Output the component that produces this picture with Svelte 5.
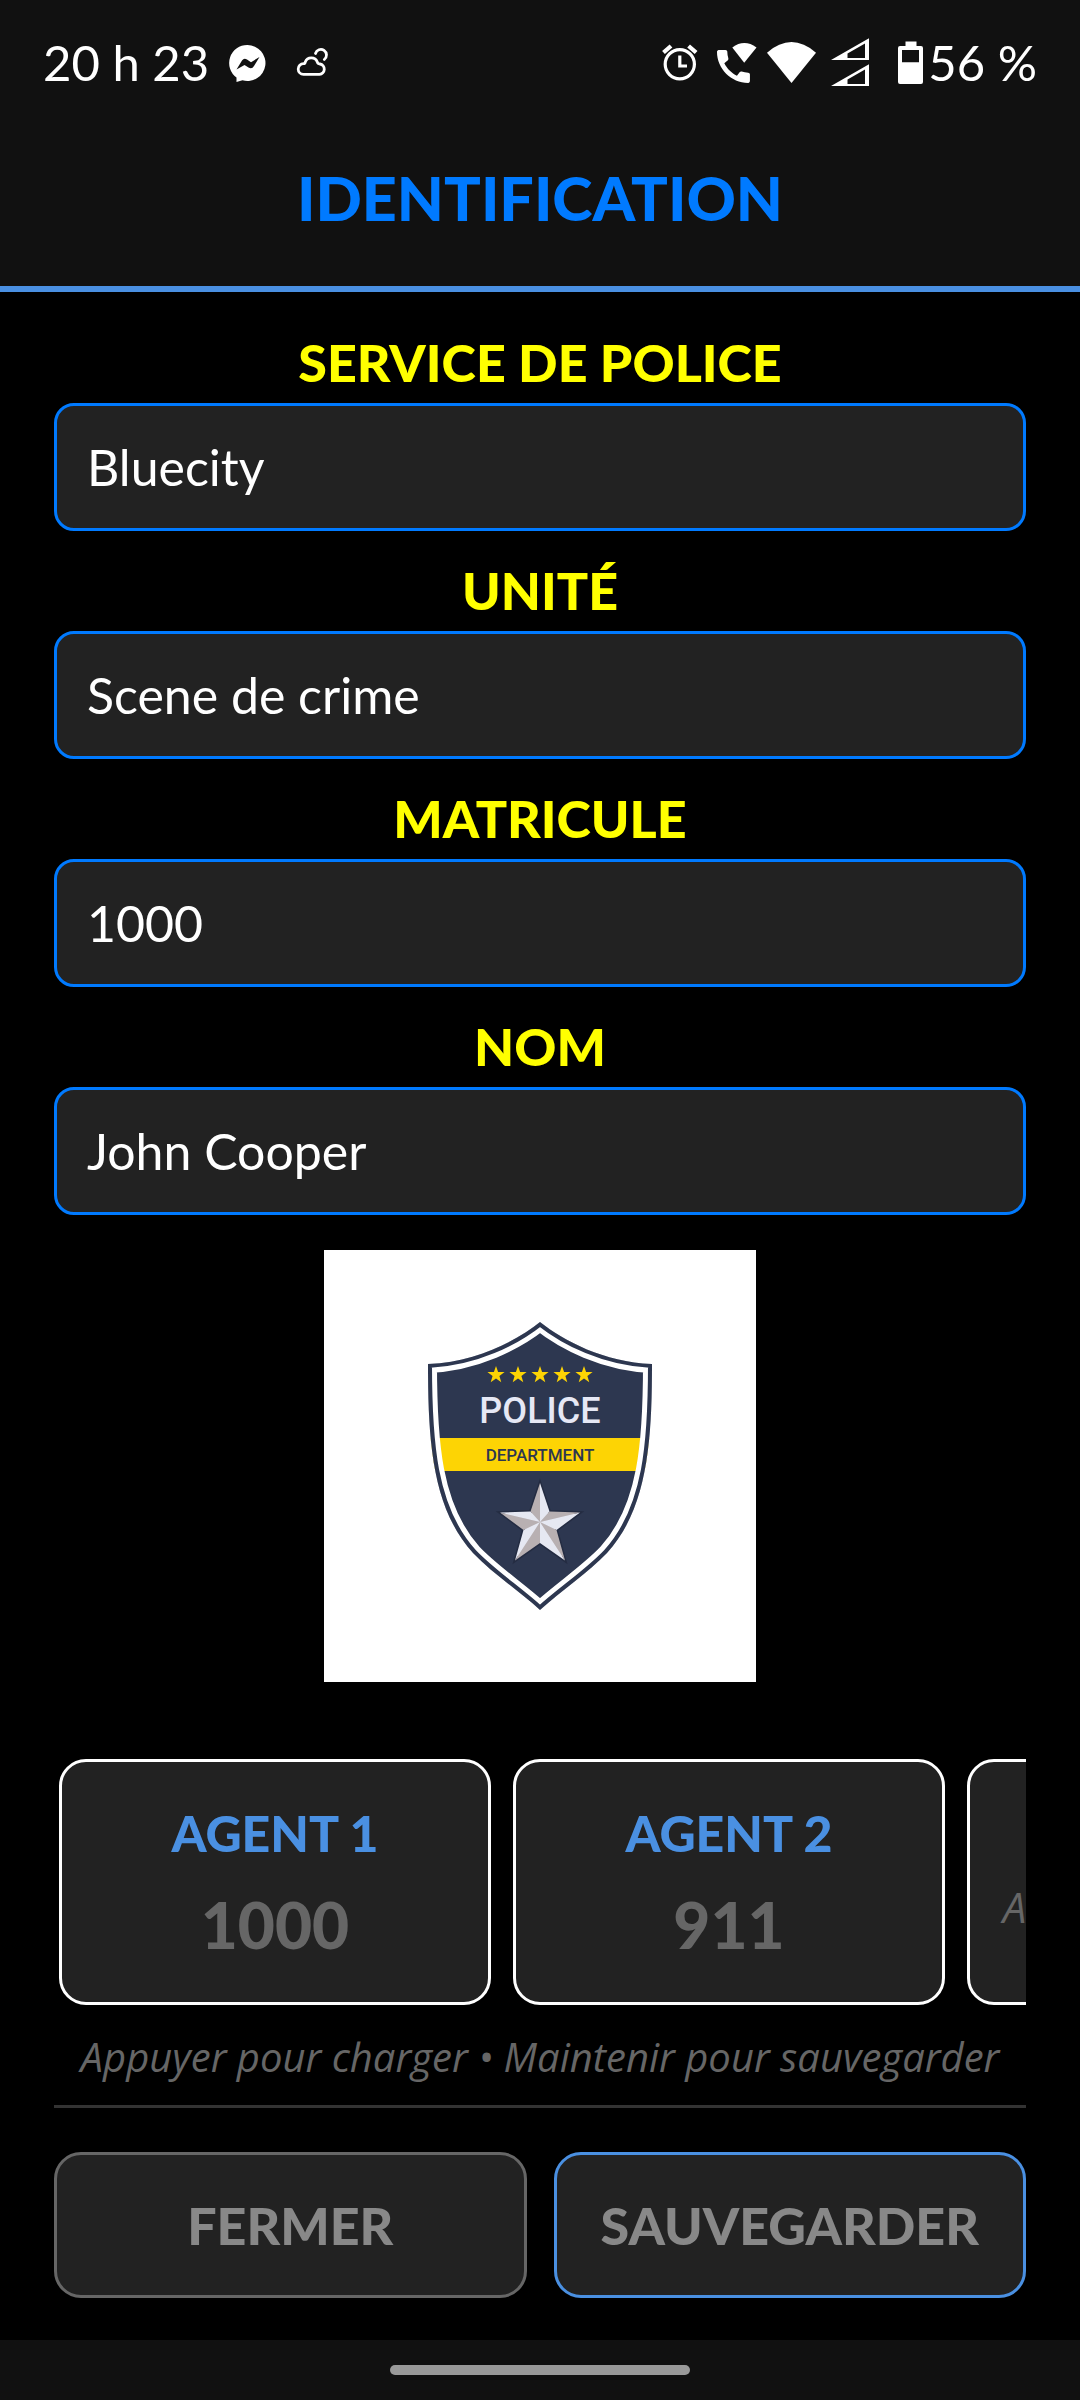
<script lang="ts">
  type Field = {
    id: string;
    label: string;
    value: string;
  };

  type Agent = {
    name: string;
    badge: string | null;
  };

  let fields: Field[] = $state([
    { id: 'service', label: 'SERVICE DE POLICE', value: 'Bluecity' },
    { id: 'unite', label: 'UNITÉ', value: 'Scene de crime' },
    { id: 'matricule', label: 'MATRICULE', value: '1000' },
    { id: 'nom', label: 'NOM', value: 'John Cooper' }
  ]);

  const agents: Agent[] = [
    { name: 'AGENT 1', badge: '1000' },
    { name: 'AGENT 2', badge: '911' },
    { name: 'AGENT 3', badge: null }
  ];

  const smallStars = [172, 194, 216, 238, 260];

  function loadAgent(agent: Agent) {
    if (agent.badge) {
      fields[2].value = agent.badge;
    }
  }
</script>

<div class="screen">
  <header>
    <div class="status-bar">
      <div class="status-left">
        <span>20 h 23</span>
        <svg class="status-icon" viewBox="0 0 50 50" aria-hidden="true">
          <path fill="#fff" d="M24.5 8a18 18 0 1 1-5 35.300L13.500 45V40.500A18 18 0 0 1 24.500 8z" />
          <path fill="#111" d="M13.500 32.500 19 23.500Q21 20.500 24 22.500L28 25.200 36.500 20 31 29Q29 32.500 25.500 30.500L21.500 28z" />
        </svg>
        <svg class="status-icon" viewBox="0 0 50 50" fill="none" stroke="#fff" stroke-width="2.800" stroke-linecap="round" aria-hidden="true">
          <path d="M16.500 37.300A5.300 5.300 0 0 1 16.500 26.700Q18 26.700 18.300 25A6.400 6.400 0 0 1 30.300 25Q30.700 26.800 33 27A5.200 5.200 0 0 1 32.500 37.300z" />
          <path d="M28.500 16.500A5.600 5.600 0 1 1 37.300 22.500" />
        </svg>
      </div>
      <div class="status-right">
        <svg class="status-icon" viewBox="0 0 50 50" fill="none" stroke="#fff" stroke-width="3.200" aria-hidden="true">
          <circle cx="24.800" cy="27.300" r="14.600" />
          <path d="M24.800 18.500V29H32" />
          <path stroke-width="4.200" d="M8.500 15.500 16 9M41.100 15.500 33.600 9" />
        </svg>
        <svg class="status-icon" viewBox="0 0 50 50" fill="#fff" aria-hidden="true">
          <path transform="translate(.5 7.500) scale(1.830)" d="M20.010 15.380c-1.230 0-2.420-.2-3.530-.56-.35-.12-.74-.03-1.010.24l-1.570 1.970c-2.830-1.350-5.480-3.900-6.890-6.830l1.950-1.660c.27-.28.35-.67.24-1.020-.37-1.110-.56-2.300-.56-3.530 0-.54-.45-.99-.99-.99H4.190C3.650 3 3 3.240 3 3.990 3 13.280 10.730 21 20.010 21c.71 0 .99-.63.99-1.180v-3.450c0-.54-.45-.99-.99-.99z" />
          <path d="M33.200 25.700 21.300 10.500Q33.300 1.700 45.500 10.500z" />
        </svg>
        <svg class="status-icon" viewBox="0 0 50 50" fill="#fff" aria-hidden="true">
          <path d="M24.500 46 0 15.700Q24.500-5.500 49 15.700z" />
        </svg>
        <svg class="status-icon" viewBox="0 0 50 50" fill="#fff" fill-rule="evenodd" aria-hidden="true">
          <path d="M8 23 46 1.300V23zM24.500 21H42V6.500L24.500 16.500z" />
          <path d="M8 49 46 27.300V49zM24.500 47H42V32.500L24.500 42.500z" />
        </svg>
        <svg class="status-icon" viewBox="0 0 50 50" fill="#fff" fill-rule="evenodd" aria-hidden="true">
          <path d="M26.500 4.500h11V9H42a2 2 0 0 1 2 2v34a2 2 0 0 1-2 2H21a2 2 0 0 1-2-2V11a2 2 0 0 1 2-2h5.500zM23 13v12.300h17V13z" />
        </svg>
        <span>56 %</span>
      </div>
    </div>
    <h1>IDENTIFICATION</h1>
  </header>

  <main>
    <form class="fields">
      {#each fields as field (field.id)}
        <div class="field">
          <label for={field.id}>{field.label}</label>
          <input id={field.id} type="text" bind:value={field.value} />
        </div>
      {/each}
    </form>

    <svg class="crest" viewBox="0 0 432 432" role="img" aria-label="Police Department">
      <defs>
        <path id="shield" d="M216 72C192 91 152 112 104 114C104 190 108 258 149 303C168 323 194 340 216 360C238 340 264 323 283 303C324 258 328 190 328 114C280 112 240 91 216 72z" />
        <clipPath id="shield-clip">
          <use href="#shield" />
        </clipPath>
      </defs>
      <rect width="432" height="432" fill="#fff" />
      <g clip-path="url(#shield-clip)">
        <use href="#shield" fill="#2d3750" />
        <rect x="100" y="188" width="232" height="33" fill="#fdd404" />
        <use href="#shield" fill="none" stroke="#fff" stroke-width="18" />
        <use href="#shield" fill="none" stroke="#2d3750" stroke-width="8" />
      </g>
      {#each smallStars as x}
        <path
          transform={`translate(${x} 125)`}
          fill="#fdd404"
          d="M0-9 2.100-2.900H8.600L3.400 1 5.300 7.300 0 3.500-5.300 7.300-3.400 1-8.600-2.900H-2.100z"
        />
      {/each}
      <text class="crest-title" x="216" y="173">POLICE</text>
      <text class="crest-band" x="216" y="211">DEPARTMENT</text>
      <g transform="translate(216 272)">
        <path fill="#dcdce6" stroke="#242c42" stroke-width="3" d="M0-39 9.500-10.500 40-9.500 16.500 8 25 38.500 0 21-25 38.500-16.500 8-40-9.500-9.500-10.500z" />
        <path fill="#e6e8f2" d="M0 0V-39L9.500-10.500zM0 0 40-9.500 16.500 8zM0 0 25 38.500 0 21zM0 0-25 38.500-16.500 8zM0 0-40-9.500-9.500-10.500z" />
        <path fill="#b8b0b2" d="M0 0V-39L-9.500-10.500zM0 0 40-9.500 9.500-10.500zM0 0 25 38.500 16.500 8zM0 0-25 38.500 0 21zM0 0-40-9.500-16.500 8z" />
      </g>
    </svg>

    <div class="agents">
      {#each agents as agent}
        <button type="button" class="agent" onclick={() => loadAgent(agent)}>
          <span class="agent-name">{agent.name}</span>
          {#if agent.badge}
            <span class="agent-badge">{agent.badge}</span>
          {:else}
            <span class="agent-empty">Aucune sauvegarde</span>
          {/if}
        </button>
      {/each}
    </div>
    <p class="hint">Appuyer pour charger • Maintenir pour sauvegarder</p>

    <div class="actions">
      <button type="button" class="action">FERMER</button>
      <button type="button" class="action primary">SAUVEGARDER</button>
    </div>
  </main>

  <footer>
    <div class="home-handle"></div>
  </footer>
</div>

<style>
  :global(body) {
    background: #000;
  }

  .screen {
    display: flex;
    flex-direction: column;
    min-height: 100vh;
    background: #000;
    color: #fff;
    font-family: Lato, 'Open Sans', sans-serif;
  }

  header {
    background: #111;
    border-bottom: 6px solid #4a90e2;
  }

  .status-bar {
    display: flex;
    justify-content: space-between;
    align-items: center;
    height: 124px;
    padding: 0 43px;
    font-size: 49px;
    line-height: 60px;
  }

  .status-left,
  .status-right {
    display: flex;
    align-items: center;
  }

  .status-left {
    gap: 14px;
  }

  .status-right {
    gap: 6px;
  }

  .status-right span {
    margin-left: -7px;
  }

  .status-icon {
    width: 50px;
    height: 50px;
    flex: none;
  }

  h1 {
    margin: 0;
    padding: 38px 0 52px;
    color: #007aff;
    font-size: 61px;
    line-height: 72px;
    font-weight: 900;
    text-align: center;
  }

  main {
    flex: 1;
    display: flex;
    flex-direction: column;
    padding: 40px 54px 42px;
  }

  .fields {
    display: flex;
    flex-direction: column;
    gap: 29px;
  }

  .field {
    display: flex;
    flex-direction: column;
    gap: 11px;
  }

  label {
    color: #ff0;
    font-size: 52px;
    line-height: 60px;
    font-weight: 900;
    text-align: center;
  }

  input {
    box-sizing: border-box;
    width: 100%;
    height: 128px;
    padding: 0 30px;
    border: 3px solid #007aff;
    border-radius: 20px;
    background: #222;
    color: #fff;
    font-family: inherit;
    font-size: 50px;
    outline: none;
  }

  .crest {
    align-self: center;
    width: 432px;
    height: 432px;
    margin: 35px 0 77px;
  }

  .crest-title,
  .crest-band {
    font-family: Roboto, 'Liberation Sans', sans-serif;
    font-weight: 500;
    text-anchor: middle;
  }

  .crest-title {
    fill: #e6e8f5;
    font-size: 36px;
  }

  .crest-band {
    fill: #2d3750;
    font-size: 17px;
  }

  .agents {
    display: flex;
    gap: 22px;
    padding: 0 5px;
    overflow-x: auto;
    scrollbar-width: none;
  }

  .agent {
    box-sizing: border-box;
    flex: none;
    display: flex;
    flex-direction: column;
    align-items: center;
    gap: 22px;
    width: 432px;
    height: 246px;
    padding: 41px 12px 36px;
    border: 3px solid #fff;
    border-radius: 27px;
    background: #222;
    font-family: inherit;
    cursor: pointer;
  }

  .agent-name {
    color: #4a90e2;
    font-size: 50px;
    line-height: 60px;
    font-weight: 900;
  }

  .agent-badge {
    color: #666;
    font-size: 64px;
    line-height: 80px;
    font-weight: 900;
  }

  .agent-empty {
    color: #666;
    font-family: 'Open Sans', sans-serif;
    font-size: 42px;
    line-height: 44px;
    font-style: italic;
    white-space: nowrap;
  }

  .hint {
    margin: 0;
    padding: 28px 0 24px;
    border-bottom: 3px solid #333;
    color: #666;
    font-family: 'Open Sans', sans-serif;
    font-size: 40px;
    line-height: 48px;
    font-style: italic;
    text-align: center;
  }

  .actions {
    display: grid;
    grid-template-columns: 1fr 1fr;
    gap: 27px;
    margin-top: 44px;
  }

  .action {
    height: 146px;
    padding: 0;
    border: 3px solid #666;
    border-radius: 27px;
    background: #222;
    color: #888;
    font-family: inherit;
    font-size: 52px;
    font-weight: 900;
    cursor: pointer;
  }

  .action.primary {
    border-color: #4a90e2;
  }

  footer {
    display: flex;
    justify-content: center;
    align-items: center;
    height: 60px;
    background: #111;
  }

  .home-handle {
    width: 300px;
    height: 10px;
    border-radius: 5px;
    background: #999;
  }
</style>
